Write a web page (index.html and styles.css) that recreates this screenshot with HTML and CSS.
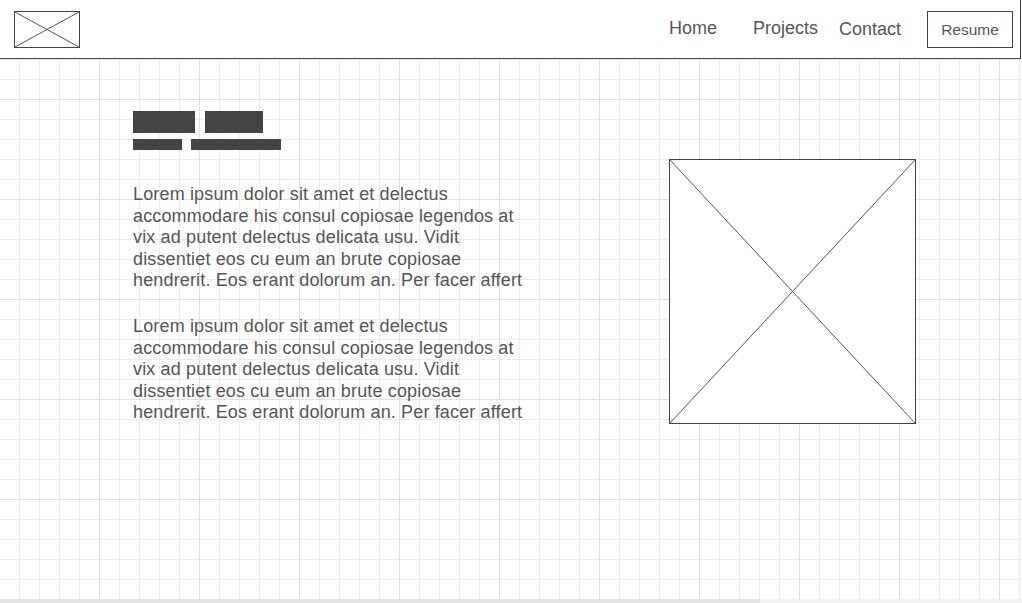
FILE: index.html
```html
<!DOCTYPE html>
<html lang="en">
<head>
<meta charset="utf-8">
<title>Portfolio wireframe</title>
<link rel="stylesheet" href="styles.css">
</head>
<body>
<header class="topbar">
  <svg class="logo" width="66" height="37" viewBox="0 0 66 37">
    <rect x="0.5" y="0.5" width="65" height="36" fill="#fff" stroke="#444"/>
    <line x1="1" y1="1" x2="65" y2="36" stroke="#555"/>
    <line x1="65" y1="1" x2="1" y2="36" stroke="#555"/>
  </svg>
  <nav class="nav">
    <a class="nav-link nav-home" href="#">Home</a>
    <a class="nav-link nav-projects" href="#">Projects</a>
    <a class="nav-link nav-contact" href="#">Contact</a>
    <a class="resume-btn" href="#">Resume</a>
  </nav>
</header>
<main class="content">
  <section class="intro">
    <div class="title-row">
      <span class="block block-a"></span>
      <span class="block block-b"></span>
    </div>
    <div class="sub-row">
      <span class="block block-c"></span>
      <span class="block block-d"></span>
    </div>
    <p class="para">Lorem ipsum dolor sit amet et delectus accommodare his consul copiosae legendos at vix ad putent delectus delicata usu. Vidit dissentiet eos cu eum an brute copiosae hendrerit. Eos erant dolorum an. Per facer affert</p>
    <p class="para">Lorem ipsum dolor sit amet et delectus accommodare his consul copiosae legendos at vix ad putent delectus delicata usu. Vidit dissentiet eos cu eum an brute copiosae hendrerit. Eos erant dolorum an. Per facer affert</p>
  </section>
  <figure class="photo">
    <svg width="247" height="265" viewBox="0 0 247 265">
      <rect x="0.5" y="0.5" width="246" height="264" fill="#fff" stroke="#444"/>
      <line x1="1" y1="1" x2="246" y2="264" stroke="#555"/>
      <line x1="246" y1="1" x2="1" y2="264" stroke="#555"/>
    </svg>
  </figure>
</main>
<div class="hscroll"><div class="hscroll-thumb"></div></div>
</body>
</html>
```
FILE: styles.css
```css
html, body {
  margin: 0;
  height: 100%;
}
body {
  overflow: hidden;
  font-family: "Liberation Sans", Arial, sans-serif;
  color: #555;
  background-color: #fff;
  background-image:
    linear-gradient(to right, transparent 99px, #e1e1e1 99px),
    linear-gradient(to bottom, transparent 99px, #e1e1e1 99px),
    linear-gradient(to right, transparent 19px, #ececec 19px),
    linear-gradient(to bottom, transparent 19px, #ececec 19px);
  background-size: 100px 100px, 100px 100px, 20px 20px, 20px 20px;
}
.topbar {
  box-sizing: border-box;
  width: 1021px;
  height: 59px;
  background: #fff;
  border-bottom: 1px solid #444;
  border-right: 1px solid #444;
  display: flex;
  align-items: center;
  padding-left: 14px;
}
.logo {
  display: block;
}
.nav {
  margin-left: auto;
  display: flex;
  align-items: center;
  margin-right: 7px;
}
.nav-link {
  font-size: 18px;
  color: #555;
  text-decoration: none;
}
.nav-home {
  margin-bottom: 1px;
}
.nav-projects {
  margin-left: 36px;
  margin-bottom: 2px;
}
.nav-contact {
  margin-left: 21px;
  margin-top: 1px;
}
.resume-btn {
  box-sizing: border-box;
  margin-left: 26px;
  width: 86px;
  height: 37px;
  border: 1px solid #444;
  display: flex;
  align-items: center;
  justify-content: center;
  font-size: 15.5px;
  color: #555;
  text-decoration: none;
  padding-top: 1px;
}
.content {
  display: flex;
  align-items: flex-start;
  padding: 52px 0 0 133px;
}
.intro {
  width: 400px;
}
.title-row, .sub-row {
  display: flex;
}
.block {
  display: block;
  background: #444;
}
.block-a { width: 62px; height: 22px; }
.block-b { width: 58px; height: 22px; margin-left: 10px; }
.sub-row { margin-top: 6px; }
.block-c { width: 49px; height: 11px; }
.block-d { width: 90px; height: 11px; margin-left: 9px; }
.para {
  margin: 34px 0 0;
  font-size: 18px;
  letter-spacing: 0.15px;
  line-height: 21.6px;
}
.para + .para {
  margin-top: 24px;
}
.photo {
  margin: 48px 0 0 136px;
}
.photo svg {
  display: block;
}
.hscroll {
  position: fixed;
  left: 0;
  bottom: 0;
  width: 100%;
  height: 4px;
  background: #f1f1f1;
}
.hscroll-thumb {
  width: 760px;
  height: 100%;
  background: #e4e4e4;
}
```
